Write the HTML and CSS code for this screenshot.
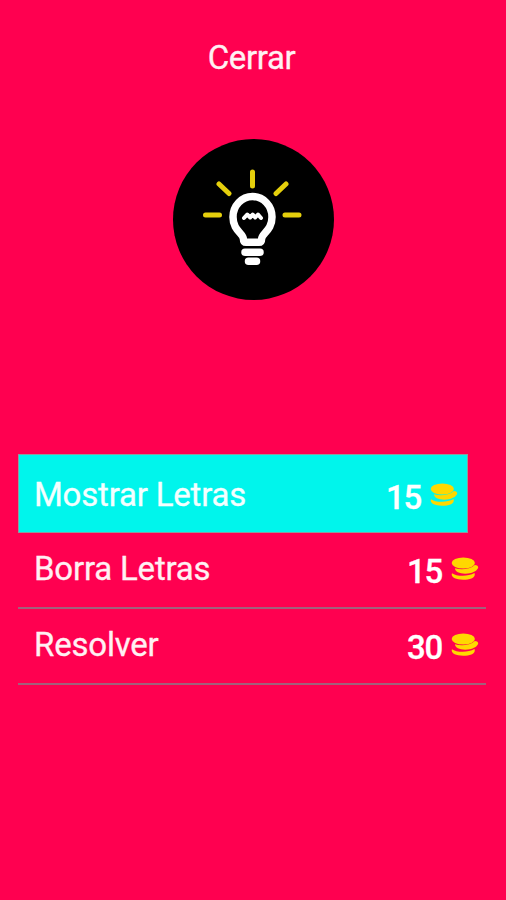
FILE: index.html
```
<!DOCTYPE html>
<html lang="es">
  <head>
    <meta charset="utf-8">
    <title>Ayudas</title>
    <link rel="stylesheet" href="styles.css">
  </head>
  <body>

    <svg class="display-none">
      <symbol id="coins" viewBox="0 0 28 24">
        <path d="M1 16.200C5 19.300 17 20 23.500 16C25 20 20 22.800 12 22.800C4 22.800 -.5 20 1 16.200Z"/>
        <path d="M4 11.300C10 13 19 12.500 23.800 8C30 8.500 27 14.200 20 16C12 18 4 15.800 4 11.300Z"/>
        <ellipse cx="12.300" cy="6" rx="11.600" ry="5.500"/>
      </symbol>
    </svg>

    <header>
      <a class="close">Cerrar</a>
    </header>

    <main>
      <svg class="bulb" viewBox="0 0 162 162">
        <circle cx="81.500" cy="81.500" r="80.500"/>
        <g class="rays">
          <path d="M80.500 34v14M47 46l10 9.500M114 46l-10 9.500M33.500 77h14M113 77h14"/>
        </g>
        <g class="glass">
          <path d="M74 104.200h13q2.500 0 2.500-2.800C89.500 95 100 93 100 79A19.500 20.500 0 0 0 61 79C61 93 71.500 95 71.500 101.400q0 2.800 2.500 2.800Z"/>
        </g>
        <path class="filament" d="M72 80l3.200-3.500 3 3 2.500-3 2.500 3 2.800-3 3 3.500"/>
        <path class="base" d="M73 114.300h15M76.500 123.300h8"/>
      </svg>

      <ul class="options">
        <li class="option selected">
          <span class="name">Mostrar Letras</span>
          <span class="price">15</span>
          <svg class="coins"><use href="#coins"/></svg>
        </li>
        <li class="option">
          <span class="name">Borra Letras</span>
          <span class="price">15</span>
          <svg class="coins"><use href="#coins"/></svg>
        </li>
        <li class="option">
          <span class="name">Resolver</span>
          <span class="price">30</span>
          <svg class="coins"><use href="#coins"/></svg>
        </li>
      </ul>
    </main>

  </body>
</html>
```
FILE: styles.css
```
*,
*:before,
*:after {
  box-sizing: border-box;
}

html,
body {
  height: 100%;
}

body {
  display: flex;
  flex-flow: column;
  background: #FF0050;
  margin: 0px;
  color: #FFF0F3;
  font-family: Roboto, sans-serif;
  font-size: 33px;
  line-height: 40px;
  -webkit-text-stroke: 0.3px;
}

header {
  height: 138px;
  padding: 38px 3px 0px 0px;
  text-align: center;
}

main {
  display: flex;
  flex-flow: column;
  align-items: center;
}

.close {
  letter-spacing: -0.4px;
}

.bulb {
  width: 162px;
  height: 162px;
}
.rays,
.glass,
.filament,
.base {
  fill: none;
  stroke: #FFF;
  stroke-linecap: round;
  stroke-linejoin: round;
}
.rays {
  stroke: #E5CF0C;
  stroke-width: 5px;
}
.glass {
  stroke-width: 7.5px;
}
.filament {
  stroke-width: 4px;
}
.base {
  stroke-width: 7.5px;
}

.options {
  width: 100%;
  margin: 154px 0px 0px;
  padding: 0px 20px 0px 18px;
  list-style: none;
}

.option {
  display: flex;
  align-items: flex-start;
  height: 76px;
  border-bottom: 2px solid #A2607C;
  padding: 16px 7px 0px 16px;
}
.option.selected {
  width: 450px;
  height: 79px;
  background: #00F5EC;
  border: 1px solid #8C9C9C;
  padding: 20px 9px 0px 15px;
  color: #F4FFFF;
}

.name {
  flex: 1;
  letter-spacing: -0.2px;
}

.price {
  margin: 3px 9px 0px 0px;
  color: #FFF;
  font-weight: 500;
  letter-spacing: -1.3px;
}

.coins {
  width: 28px;
  height: 24px;
  margin-top: 8px;
  fill: #FFD800;
}



.display-none {
  display: none;
}
```
